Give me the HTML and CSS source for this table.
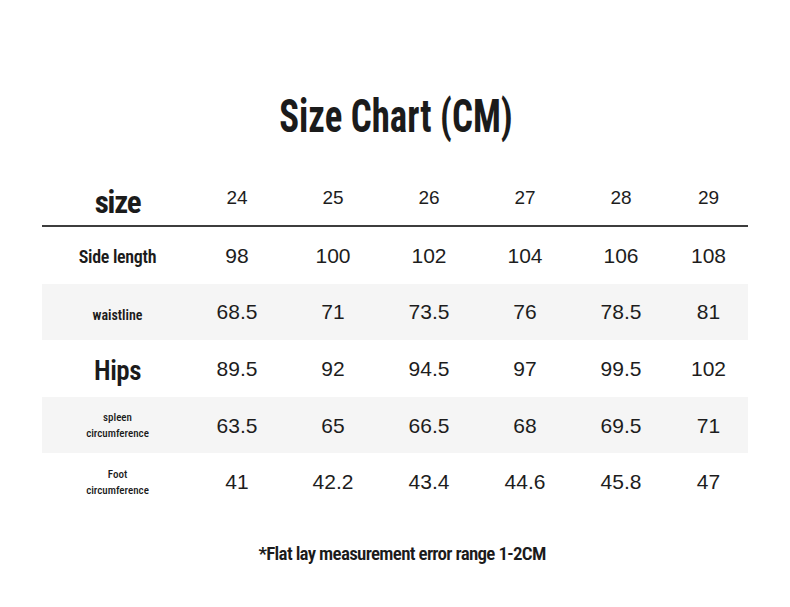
FILE: index.html
```html
<!DOCTYPE html>
<html lang="en">
<head>
<meta charset="utf-8">
<title>Size Chart (CM)</title>
<link rel="stylesheet" href="styles.css">
</head>
<body>
<main class="page">
  <h1 class="title">Size Chart (CM)</h1>
  <div class="chart">
    <div class="row head">
      <div class="label label-size">size</div>
      <div class="cell">24</div>
      <div class="cell">25</div>
      <div class="cell">26</div>
      <div class="cell">27</div>
      <div class="cell">28</div>
      <div class="cell">29</div>
    </div>
    <div class="row">
      <div class="label label-md">Side length</div>
      <div class="cell">98</div>
      <div class="cell">100</div>
      <div class="cell">102</div>
      <div class="cell">104</div>
      <div class="cell">106</div>
      <div class="cell">108</div>
    </div>
    <div class="row shade">
      <div class="label label-sm">waistline</div>
      <div class="cell">68.5</div>
      <div class="cell">71</div>
      <div class="cell">73.5</div>
      <div class="cell">76</div>
      <div class="cell">78.5</div>
      <div class="cell">81</div>
    </div>
    <div class="row">
      <div class="label label-lg">Hips</div>
      <div class="cell">89.5</div>
      <div class="cell">92</div>
      <div class="cell">94.5</div>
      <div class="cell">97</div>
      <div class="cell">99.5</div>
      <div class="cell">102</div>
    </div>
    <div class="row shade">
      <div class="label label-xs">spleen<br>circumference</div>
      <div class="cell">63.5</div>
      <div class="cell">65</div>
      <div class="cell">66.5</div>
      <div class="cell">68</div>
      <div class="cell">69.5</div>
      <div class="cell">71</div>
    </div>
    <div class="row">
      <div class="label label-xs">Foot<br>circumference</div>
      <div class="cell">41</div>
      <div class="cell">42.2</div>
      <div class="cell">43.4</div>
      <div class="cell">44.6</div>
      <div class="cell">45.8</div>
      <div class="cell">47</div>
    </div>
  </div>
  <p class="note">*Flat lay measurement error range 1-2CM</p>
</main>
</body>
</html>
```
FILE: styles.css
```css
html, body {
  margin: 0;
  padding: 0;
  background: #ffffff;
}

.page {
  width: 790px;
  height: 607px;
  display: flex;
  flex-direction: column;
  align-items: center;
  color: #1b1b1b;
  font-family: "Liberation Sans", Arial, sans-serif;
}

.title,
.label,
.note {
  font-family: "Roboto Condensed", "Liberation Sans Narrow", "DejaVu Sans Condensed", "Liberation Sans", sans-serif;
  font-stretch: condensed;
}

.title {
  margin: 93px 0 0 2px;
  font-size: 46px;
  line-height: 46px;
  font-weight: 700;
  letter-spacing: 0;
  transform: scaleX(0.8);
}

.chart {
  width: 706px;
  margin-top: 31px;
  display: flex;
  flex-direction: column;
}

.row {
  display: grid;
  grid-template-columns: 147px repeat(5, 96px) 79px;
  height: 56.6px;
  align-items: center;
}

.row.head {
  height: 55px;
  border-bottom: 2px solid #3d3d3d;
}

.row.shade {
  background: #f5f5f5;
}

.cell {
  text-align: center;
  font-size: 21px;
  line-height: 1;
  font-weight: 400;
  color: #1d1d1d;
}

.head .cell {
  font-size: 19px;
}

.label {
  text-align: center;
  font-weight: 700;
  color: #1b1b1b;
  padding-left: 4px;
}

.label-size {
  font-size: 31px;
  line-height: 1;
  padding-top: 10px;
  letter-spacing: -1.2px;
}

.label-md {
  font-size: 18px;
  line-height: 1;
  padding-top: 3px;
  font-weight: 600;
  letter-spacing: -0.3px;
}

.label-sm {
  font-size: 14px;
  line-height: 1;
  padding-top: 6px;
  font-weight: 600;
}

.label-lg {
  font-size: 27px;
  line-height: 1;
  padding-top: 6px;
  font-weight: 600;
  letter-spacing: -0.5px;
}

.label-xs {
  font-size: 11px;
  line-height: 16px;
  font-weight: 500;
  padding-top: 2px;
}

.note {
  margin: 32px 0 0 14px;
  font-size: 19px;
  line-height: 23px;
  font-weight: 600;
  letter-spacing: -0.7px;
}
```
